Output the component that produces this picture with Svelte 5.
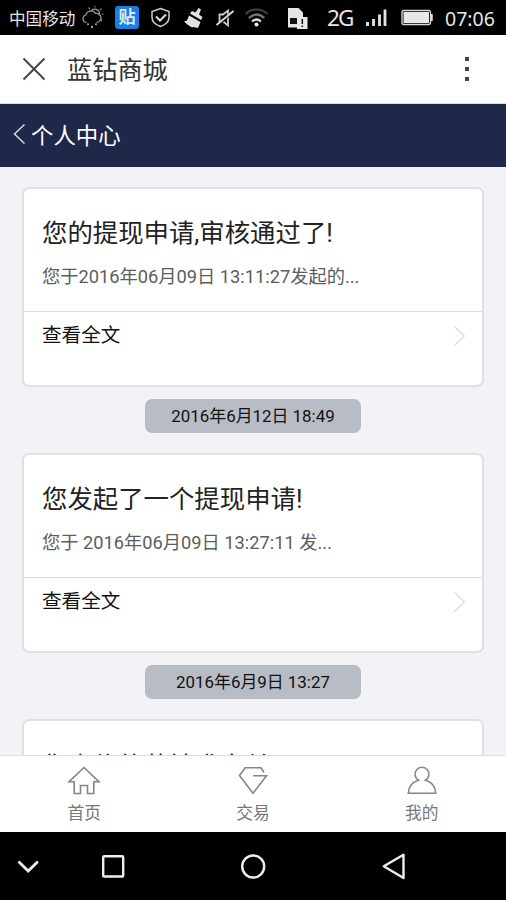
<script lang="ts">
	type Notice = { title: string; summary?: string; time?: string };

	const notices: Notice[] = [
		{
			title: '您的提现申请,审核通过了!',
			summary: '您于2016年06月09日 13:11:27发起的...',
			time: '2016年6月12日 18:49'
		},
		{
			title: '您发起了一个提现申请!',
			summary: '您于 2016年06月09日 13:27:11 发...',
			time: '2016年6月9日 13:27'
		},
		{ title: '您卖信的蓝钻求交单!' }
	];
</script>

<div class="screen">
	<div class="status">
		<span class="carrier">中国移动</span>
		<svg class="icons" width="230" height="36" viewBox="80 0 230 36" fill="none" aria-hidden="true">
			<!-- weather -->
			<g stroke="#999" stroke-width="1.2" stroke-linecap="round">
				<path d="M86 22.5c-4-1-4-7 0-7.500c1-5 8-5.500 9.500-1.500c5-1 7.500 5 3.500 8l-2 1" />
				<path d="M91 11c3-4 10-1 8 4M95 6.500v.5M89 8l.5.5M101 9l-.6.6M102.500 14h.5M101 20l.5.5" />
				<path d="M88 24v.5M92 26.500v1M96 24v.5" stroke="#ddd" stroke-width="1.500" />
			</g>
			<rect x="115" y="6" width="24" height="23" rx="3" fill="#1680e8" />
			<!-- shield -->
			<path d="M160.500 8.500l8.500 3v6c0 4-3 7-8.500 9c-5.500-2-8.500-5-8.500-9v-6z" stroke="#ccc" stroke-width="1.500" />
			<path d="M156 16.500l4 4 6-6" stroke="#ddd" stroke-width="2" />
			<!-- cleaner brush -->
			<path d="M198.500 8l2.500 1.500-2 5 3.500 2.500-1.500 3-11-6.500 2-2.500 3.500 1.500z" fill="#e2e2e2" />
			<path d="M189 15.500l11.500 6.500-2.500 6-5-1-1 .5-4-2.500-4-3.500 3-1z" fill="#e2e2e2" />
			<!-- muted speaker -->
			<path d="M219.500 14.500h3.500l5-4v15l-5-4h-3.500z" stroke="#ccc" stroke-width="1.800" />
			<path d="M217 26l16-14.500" stroke="#000" stroke-width="2.500" />
			<path d="M216.500 25l17-14" stroke="#ddd" stroke-width="1.900" />
			<!-- wifi -->
			<path d="M245.500 14c6-6 16-6 22 0" stroke="#444" stroke-width="2" />
			<path d="M248.800 18c5-4.500 10.500-4.500 15.500 0" stroke="#777" stroke-width="2.200" />
			<path d="M252 21.500c3-2.700 6-2.700 9 0" stroke="#ddd" stroke-width="2.300" />
			<circle cx="256.500" cy="24.500" r="2" fill="#eee" />
			<!-- sim card alert -->
			<path d="M288 8h10.500l4.500 4.500v15h-15z" fill="#e4e4e4" />
			<path d="M290 18h7v6h-7z" fill="#111" />
			<rect x="297" y="17" width="10.500" height="12" fill="#e8e8e8" />
			<path d="M302.300 19v5M302.300 25.500v1.500" stroke="#111" stroke-width="1.500" />
		</svg>
		<span class="badge">贴</span>
		<span class="network">2G</span>
		<svg class="signal" width="72" height="36" viewBox="364 0 72 36" fill="none" aria-hidden="true">
			<path d="M367.500 22v4M373.500 19v7M379.500 14.500v11.500M385 9.500v16.500" stroke="#e4e4e4" stroke-width="2.800" />
			<rect x="402" y="10.500" width="28.500" height="14" rx="2" stroke="#ddd" stroke-width="1.300" />
			<rect x="403.500" y="12" width="25.500" height="11" fill="#e8e8e8" />
			<path d="M431.500 14v7" stroke="#ddd" stroke-width="2.500" />
		</svg>
		<time class="clock">07:06</time>
	</div>

	<header class="app-bar">
		<button type="button" aria-label="关闭">
			<svg width="24" height="24" viewBox="0 0 24 24" aria-hidden="true">
				<path d="M1.500 1.500l21 21M22.500 1.500l-21 21" fill="none" stroke="#444" stroke-width="1.900" />
			</svg>
		</button>
		<h1>蓝钻商城</h1>
		<button type="button" class="more" aria-label="更多"><i></i><i></i><i></i></button>
	</header>

	<nav class="back-bar">
		<svg width="14" height="22" viewBox="0 0 14 22" aria-hidden="true">
			<path d="M11.500 1.500L1.500 11l10 9.500" fill="none" stroke="#d5d7e2" stroke-width="1.500" />
		</svg>
		<span>个人中心</span>
	</nav>

	<main>
		{#each notices as notice}
			<article class="card">
				<div class="body">
					<h2>{notice.title}</h2>
					{#if notice.summary}<p>{notice.summary}</p>{/if}
				</div>
				{#if notice.summary}
					<div class="link">
						<span>查看全文</span>
						<svg width="13" height="22" viewBox="0 0 13 22" aria-hidden="true">
							<path d="M1.500 1.500l10 9.500-10 9.500" fill="none" stroke="#dadada" stroke-width="1.100" />
						</svg>
					</div>
				{/if}
			</article>
			{#if notice.time}
				<time class="stamp">{notice.time}</time>
			{/if}
		{/each}
	</main>

	<nav class="tabs">
		<button type="button">
			<svg width="34" height="30" viewBox="0 0 34 30" aria-hidden="true">
				<path d="M17 1.500L1.800 15.800h5.400v11.700h6.300v-8h7v8h6.300V15.800h5.400z" />
			</svg>
			<span>首页</span>
		</button>
		<button type="button">
			<svg width="34" height="30" viewBox="0 0 34 30" aria-hidden="true">
				<path d="M28 6.500l-3-4.700H9.200L3.500 9.500 17 27.300 30.500 9.800H17" />
			</svg>
			<span>交易</span>
		</button>
		<button type="button">
			<svg width="34" height="30" viewBox="0 0 34 30" aria-hidden="true">
				<path d="M13.500 14.300a7 7 0 1 1 7 0c6 1.700 10 6.500 10.200 13H3.300c.2-6.500 4.200-11.300 10.200-13z" />
			</svg>
			<span>我的</span>
		</button>
	</nav>

	<div class="system">
		<svg width="506" height="68" viewBox="0 832 506 68" fill="none" stroke="#eee" stroke-width="2.400" aria-hidden="true">
			<path d="M18.500 861.500l9.700 9.500 9.700-9.500" stroke-width="2.800" />
			<rect x="103.200" y="856.200" width="20" height="20.300" rx="1" />
			<circle cx="253.200" cy="866.500" r="11" />
			<path d="M403.500 854.700v23.300l-19.700-11.700z" stroke-linejoin="round" />
		</svg>
	</div>
</div>

<style>
	:global(body) {
		margin: 0;
		background: #000;
	}

	.screen {
		display: flex;
		flex-direction: column;
		width: 506px;
		height: 900px;
		overflow: hidden;
		background: #f3f2f6;
		color: #222;
		font-family: Roboto, 'Noto Sans CJK SC', sans-serif;
	}

	button {
		border: 0;
		padding: 0;
		background: none;
		font: inherit;
		color: inherit;
	}

	svg {
		display: block;
		flex: none;
	}

	.status {
		position: relative;
		display: flex;
		flex: none;
		align-items: center;
		height: 35px;
		background: #000;
		color: #e6e6e6;
		white-space: nowrap;
	}

	.carrier {
		width: 71px;
		padding-left: 9px;
		font-size: 16.6px;
	}

	.badge {
		position: absolute;
		top: 6px;
		left: 115px;
		width: 24px;
		font-size: 17px;
		font-weight: 700;
		line-height: 23px;
		text-align: center;
	}

	.network {
		width: 47px;
		padding-left: 17px;
		margin-right: -10px;
		font-family: 'Noto Sans', sans-serif;
		font-size: 22.5px;
		letter-spacing: -1.8px;
	}

	.clock {
		margin-left: 9px;
		padding-top: 1px;
		font-family: 'Noto Sans', sans-serif;
		font-size: 19.5px;
	}

	.app-bar {
		display: flex;
		flex: none;
		align-items: center;
		box-sizing: border-box;
		height: 69px;
		padding: 0 37px 0 22px;
		border-bottom: 1px solid #d8dae4;
		background: #fff;
	}

	h1 {
		margin: 4px 0 0 21px;
		color: #333;
		font-size: 25.2px;
		font-weight: 400;
		line-height: 36px;
	}

	.more {
		display: grid;
		gap: 6px;
		margin-left: auto;
	}

	.more i {
		width: 4px;
		height: 4px;
		background: #444;
	}

	.back-bar {
		display: flex;
		flex: none;
		align-items: center;
		gap: 4px;
		box-sizing: border-box;
		height: 63px;
		padding: 0 0 3px 13px;
		background: #202849;
		color: #fff;
		font-size: 22.4px;
	}

	main {
		display: flex;
		flex: 1;
		flex-direction: column;
		min-height: 0;
		overflow: hidden;
		padding: 20px 22px 0;
	}

	.card {
		flex: none;
		box-sizing: border-box;
		height: 200px;
		border: 2px solid #e0dfe2;
		border-radius: 7px;
		background: #fff;
	}

	.body {
		box-sizing: border-box;
		height: 123px;
		padding: 25px 18px 0;
		border-bottom: 1px solid #dcdcde;
	}

	h2 {
		margin: 0;
		font-size: 25.4px;
		font-weight: 400;
		line-height: 38px;
	}

	.card:last-child h2 {
		padding-top: 1px;
	}

	p {
		margin: 11px 0 0;
		color: #5b5e60;
		font-size: 18.25px;
		line-height: 28px;
	}

	.link {
		display: flex;
		align-items: center;
		justify-content: space-between;
		padding: 9px 16px 0 18px;
		color: #111;
		font-size: 19.6px;
		line-height: 30px;
	}

	.stamp {
		flex: none;
		align-self: center;
		width: 216px;
		margin: 12px 0 20px;
		border-radius: 7px;
		background: #b8bcc5;
		color: #111;
		font-size: 16.9px;
		line-height: 34px;
		text-align: center;
	}

	.tabs {
		display: grid;
		flex: none;
		grid-template-columns: repeat(3, 1fr);
		box-sizing: border-box;
		height: 77px;
		border-top: 1px solid #dedee0;
		background: #fff;
		color: #777;
	}

	.tabs button {
		display: flex;
		flex-direction: column;
		align-items: center;
		padding-top: 10px;
		font-size: 16.8px;
		line-height: 34px;
	}

	.tabs path {
		fill: none;
		stroke: #858585;
		stroke-width: 1.6;
	}

	.system {
		flex: none;
		height: 68px;
		background: #000;
	}
</style>
